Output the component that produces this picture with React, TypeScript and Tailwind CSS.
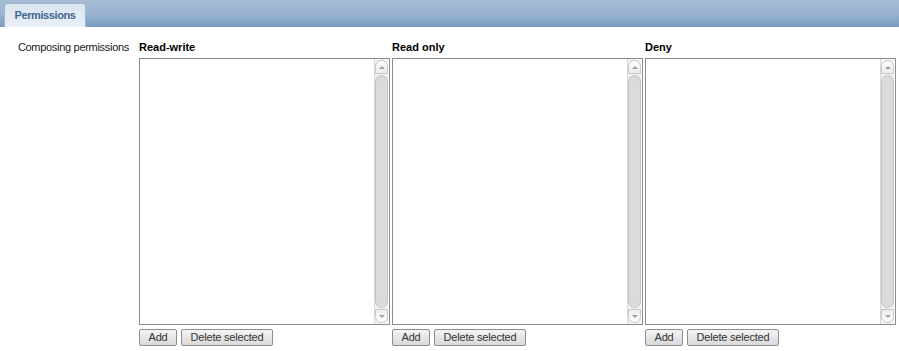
import React from "react";

function Scrollbar() {
  return (
    <div className="flex h-full w-[14px] flex-col border-l border-[#d8d8d8] bg-[#f2f2f2] py-[1px]">
      <div className="flex h-[14px] items-center justify-center rounded-t-[7px] border border-[#c8c8c8] bg-gradient-to-b from-[#ffffff] to-[#ececec]">
        <div className="h-0 w-0 border-x-[3px] border-b-[3px] border-x-transparent border-b-[#a0a0a0]" />
      </div>
      <div className="my-[1px] flex-1 rounded-[7px] border border-[#c4c4c4] bg-[#dcdbd9]" />
      <div className="flex h-[14px] items-center justify-center rounded-b-[7px] border border-[#c8c8c8] bg-gradient-to-t from-[#ffffff] to-[#ececec]">
        <div className="h-0 w-0 border-x-[3px] border-t-[3px] border-x-transparent border-t-[#a0a0a0]" />
      </div>
    </div>
  );
}

function Column({ title }: { title: string }) {
  return (
    <div className="flex w-[251px] flex-col">
      <div className="h-[18px] text-[11px] font-bold leading-[14px] text-black">{title}</div>
      <div className="flex h-[267px] justify-end border border-[#8d8d8d] bg-white pr-[1px]">
        <Scrollbar />
      </div>
      <div className="mt-[4px] flex gap-[4px]">
        <button className="h-[17px] w-[38px] rounded-[2px] border border-[#8e8e8e] bg-gradient-to-b from-[#f4f4f4] to-[#d9d9d9] text-[11px] leading-[15px] tracking-[-0.2px] text-[#333]">
          Add
        </button>
        <button className="h-[17px] w-[92px] rounded-[2px] border border-[#8e8e8e] bg-gradient-to-b from-[#f4f4f4] to-[#d9d9d9] text-[11px] leading-[15px] tracking-[-0.2px] text-[#333]">
          Delete selected
        </button>
      </div>
    </div>
  );
}

export default function App() {
  return (
    <div
      className="h-[351px] w-[899px] overflow-hidden bg-white"
      style={{ fontFamily: '"Liberation Sans", Arial, sans-serif' }}
    >
      <div className="flex h-[27px] items-end bg-gradient-to-b from-[#a6bcd4] via-[#9bb4cf] to-[#779cc1] pl-[4px]">
        <div className="flex h-[24px] w-[82px] items-center justify-center rounded-t-[3px] border border-b-0 border-[#9fb5cc] bg-gradient-to-b from-[#dae5f0] to-[#e9eff6] text-[11px] font-bold tracking-[-0.4px] text-[#3d6791]">
          Permissions
        </div>
      </div>
      <div className="mt-[13px] flex">
        <div className="w-[129px] text-right text-[11px] leading-[14px] tracking-[-0.3px] text-[#1a1a1a]">
          Composing permissions
        </div>
        <div className="ml-[10px] flex gap-[2px]">
          <Column title="Read-write" />
          <Column title="Read only" />
          <Column title="Deny" />
        </div>
      </div>
    </div>
  );
}
